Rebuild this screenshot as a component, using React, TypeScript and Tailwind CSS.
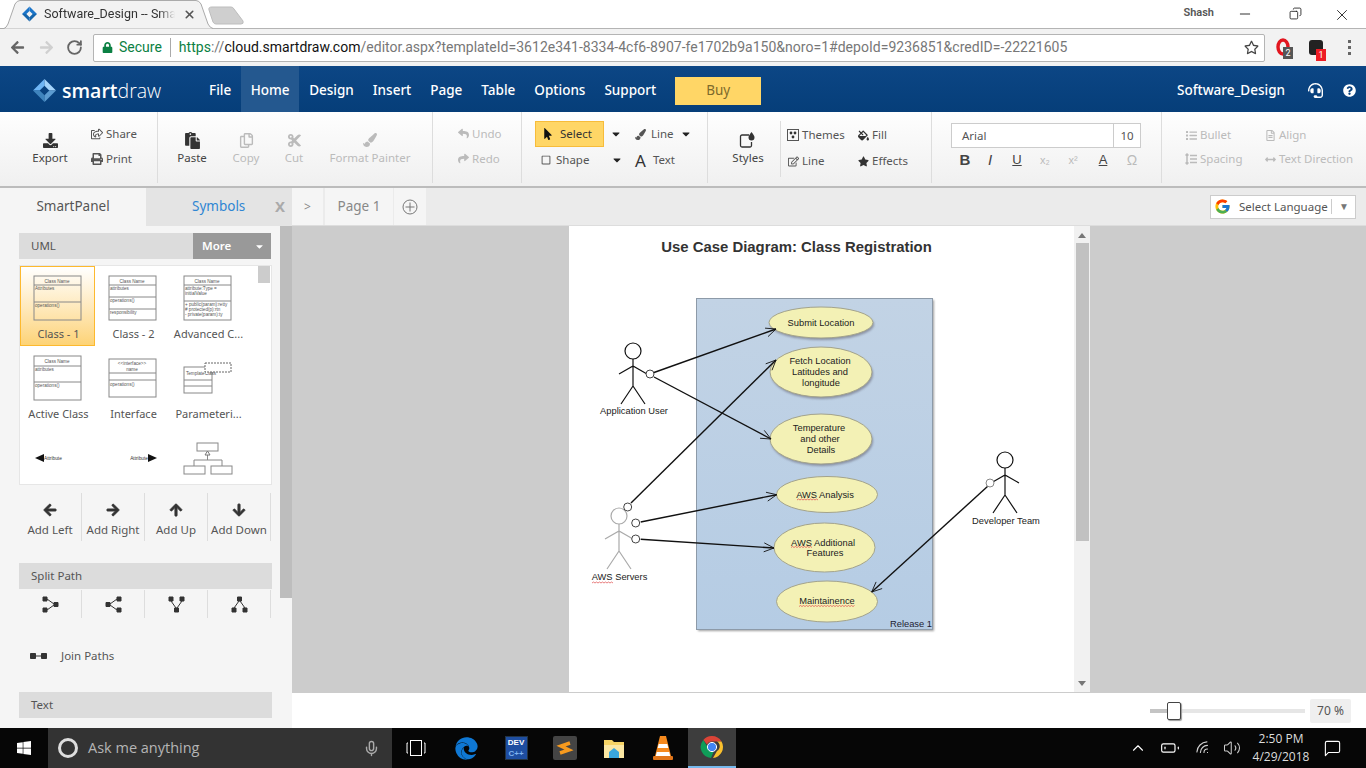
import type { ReactNode } from "react";
import {
  FaArrowDown, FaArrowLeft, FaArrowRight, FaArrowUp, FaArrowsAltH, FaCut, FaDownload, FaEdge, FaFillDrip,
  FaList, FaLock, FaMousePointer, FaPaintBrush, FaPaste, FaPrint, FaQuestionCircle, FaRegCopy, FaRegEdit,
  FaRegShareSquare, FaRegSquare, FaRegStar, FaReply, FaShare, FaStar, FaRegFileAlt, FaHeadset,
  FaWindows, FaCaretDown,
} from "react-icons/fa";
import { FcGoogle } from "react-icons/fc";
import { LuRotateCw, LuMinus, LuCopy, LuX, LuMic, LuChevronUp, LuVolume2, LuMessageSquare, LuWifi, LuBatteryLow } from "react-icons/lu";

const Diamond = ({ size }: { size: number }) => (
  <svg width={size} height={size} viewBox="0 0 24 24">
    <polygon points="12,0 12,7 7,12 0,12" fill="#6fb6f5" />
    <polygon points="12,0 24,12 17,12 12,7" fill="#a5d4fb" />
    <polygon points="0,12 7,12 12,17 12,24" fill="#3f84bd" />
    <polygon points="12,24 12,17 17,12 24,12" fill="#5c9bd0" />
  </svg>
);

const Chrome = () => (
  <div className="flex flex-col h-[66px] bg-[#f2f2f2]">
    <div className="flex h-[29px] bg-white border-b border-[#b4b4b4]">
      <div className="relative w-[244px] h-[29px] shrink-0">
        <svg className="absolute left-0 top-0" width="244" height="29" viewBox="0 0 244 29">
          <path d="M212 7 H231 Q233 7 234 9 L243 21 Q244 24 241 24 H216 Q214 24 213 22 L209 10 Q208 7 212 7Z" fill="#cfcfcf" stroke="#bdbdbd" />
          <path d="M0 28.500 H4 Q6 28 8 24 L15 4 Q17 .5 20 .5 H196 Q199 .5 201 4 L208 24 Q210 28 213 28.500" fill="#f2f2f2" stroke="#aaa" />
        </svg>
        <div className="relative flex items-center h-[28px] pl-[22px]">
          <svg width="15" height="16" viewBox="0 0 24 24">
            <polygon points="12,0 12,7 7,12 0,12" fill="#1b75c9" />
            <polygon points="12,0 24,12 17,12 12,7" fill="#1b75c9" />
            <polygon points="0,12 7,12 12,17 12,24" fill="#1565ac" />
            <polygon points="12,24 12,17 17,12 24,12" fill="#1565ac" />
          </svg>
          <span className="ml-[7px] w-[131px] whitespace-nowrap text-[12.5px] text-[#333] font-['Roboto',sans-serif] [mask-image:linear-gradient(to_right,black_88%,transparent)]">Software_Design -- Smar</span>
          <LuX className="ml-[8px] text-[#555]" size={13} strokeWidth={3} />
        </div>
      </div>
      <div className="flex-1" />
      <span className="text-[11px] text-[#555] font-semibold mt-[5px] mr-[5px] font-['Roboto',sans-serif]">Shash</span>
      <div className="flex items-start w-[147px] pt-[6px] text-[#222]">
        <span className="w-[51px] flex justify-center"><LuMinus size={16} strokeWidth={1.4} /></span>
        <span className="w-[50px] flex justify-center"><LuCopy size={13} strokeWidth={1.6} className="mt-[1px] -scale-x-100" /></span>
        <span className="w-[44px] flex justify-center"><LuX size={18} strokeWidth={1.2} /></span>
      </div>
    </div>
    <div className="flex items-center h-[37px] font-['Roboto',sans-serif]">
      <div className="flex items-center w-[93px] pl-[10px]">
        <FaArrowLeft size={15} className="text-[#666]" />
        <FaArrowRight size={15} className="text-[#d0d0d0] ml-[14px]" />
        <LuRotateCw size={17} strokeWidth={2.6} className="text-[#666] ml-[12px]" />
      </div>
      <div className="flex items-center w-[1172px] h-[28px] bg-white border border-[#b4b4b4] rounded-[2px] pl-[8px] text-[14px] whitespace-nowrap">
        <FaLock size={11} className="text-[#0b8043]" />
        <span className="ml-[6px] text-[#0b8043]">Secure</span>
        <span className="mx-[8px] w-px h-[19px] bg-[#aaa]" />
        <span className="text-[#777] tracking-[0.02px]">
          <span className="text-[#0b8043]">https</span>://<span className="text-[#111]">cloud.smartdraw.com</span>/editor.aspx?templateId=3612e341-8334-4cf6-8907-fe1702b9a150&noro=1#depoId=9236851&credID=-22221605
        </span>
        <span className="flex-1" />
        <FaRegStar size={15} className="text-[#444] mr-[5px]" />
      </div>
      <div className="relative w-[40px] flex justify-center">
        <svg width="18" height="20" viewBox="0 0 18 20" className="-ml-[3px]"><ellipse cx="8" cy="9" rx="5" ry="7" fill="none" stroke="#e2161f" strokeWidth="3.4" /></svg>
        <span className="absolute left-[18px] top-[9px] w-[10px] h-[12px] bg-[#555] text-white text-[9px] leading-[12px] text-center">2</span>
      </div>
      <div className="relative w-[22px] flex justify-center">
        <span className="w-[14px] h-[15px] bg-[#222] rounded-[3px]" />
        <span className="absolute left-[11px] top-[9px] w-[10px] h-[12px] bg-[#ed1c24] text-white text-[9px] leading-[12px] text-center">1</span>
      </div>
      <div className="flex flex-col gap-[3px] ml-[21px]">
        <span className="w-[3px] h-[3px] bg-[#666]" />
        <span className="w-[3px] h-[3px] bg-[#666]" />
        <span className="w-[3px] h-[3px] bg-[#666]" />
      </div>
    </div>
  </div>
);

const menu = ["Design", "Insert", "Page", "Table", "Options", "Support"];

const Header = () => (
  <div className="flex items-center h-[46px] pt-[3px] bg-gradient-to-b from-[#0c4685] to-[#063e79] text-white text-[13.5px] font-medium">
    <div className="flex items-center w-[209px] pl-[33px]">
      <Diamond size={23} />
      <span className="ml-[6px] text-[19.5px] leading-none font-['Open_Sans',sans-serif]"><span className="font-semibold">smart</span><span className="font-light">draw</span></span>
    </div>
    <span>File</span>
    <span className="flex items-center justify-center self-start w-[58px] h-[46px] -mt-[3px] pt-[3px] ml-[10px] bg-[#24588f]">Home</span>
    <div className="flex gap-[19px] ml-[10px]">
      {menu.map((m) => <span key={m}>{m}</span>)}
    </div>
    <span className="flex items-center justify-center w-[86px] h-[28px] ml-[19px] bg-[#ffd666] text-[#7d6a2c] font-normal">Buy</span>
    <span className="flex-1" />
    <span className="mr-[-1px]">Software_Design</span>
    <FaHeadset size={15} className="ml-[24px]" />
    <FaQuestionCircle size={13} className="ml-[20px] mr-[10px]" />
  </div>
);

const Big = ({ icon, label, w, off, ml = 0 }: { icon: ReactNode; label: string; w: number; off?: boolean; ml?: number }) => (
  <div className={`flex flex-col items-center pt-[18px] shrink-0 ${off ? "text-[#bbb]" : "text-[#444]"}`} style={{ width: w, marginLeft: ml }}>
    <div className="flex items-center justify-center h-[20px]">{icon}</div>
    <span className="leading-[16px] whitespace-nowrap">{label}</span>
  </div>
);

const Small = ({ icon, label, off, h = 25 }: { icon: ReactNode; label: string; off?: boolean; h?: number }) => (
  <div className={`flex items-center gap-[3px] whitespace-nowrap ${off ? "text-[#bbb]" : "text-[#555]"}`} style={{ height: h }}>
    <span className="flex justify-center w-[12px]">{icon}</span>
    <span>{label}</span>
  </div>
);

const Ribbon = () => (
  <div className="flex h-[76px] bg-gradient-to-b from-[#fefefe] to-[#f0f0f0] border-b-2 border-b-[#bcbcbc] text-[11.5px]">
    <div className="flex w-[158px] h-[71px] pl-[32px] border-r border-[#ddd] shrink-0">
      <Big w={36} label="Export" icon={<FaDownload size={15} className="text-[#333]" />} />
      <div className="flex flex-col ml-[23px] pt-[9px]">
        <Small label="Share" icon={<FaRegShareSquare size={12} />} />
        <Small label="Print" icon={<FaPrint size={12} />} />
      </div>
    </div>
    <div className="flex w-[275px] h-[71px] pl-[18px] border-r border-[#ddd] shrink-0">
      <Big w={32} label="Paste" icon={<FaPaste size={17} className="text-[#333]" />} />
      <Big w={32} ml={22} off label="Copy" icon={<FaRegCopy size={15} />} />
      <Big w={24} ml={20} off label="Cut" icon={<FaCut size={15} />} />
      <Big w={80} ml={24} off label="Format Painter" icon={<FaPaintBrush size={14} />} />
    </div>
    <div className="flex flex-col w-[89px] h-[71px] pl-[24px] pt-[9px] border-r border-[#ddd] shrink-0">
      <Small off label="Undo" icon={<FaReply size={11} />} />
      <Small off label="Redo" icon={<FaShare size={11} />} />
    </div>
    <div className="flex w-[186px] h-[71px] pt-[9px] pl-[13px] border-r border-[#ddd] shrink-0">
      <div className="flex flex-col w-[90px]">
        <div className="flex items-center">
          <div className="flex items-center w-[69px] h-[26px] pl-[6px] gap-[6px] bg-[#ffd666] border border-[#f7bc3a] text-[#333]">
            <FaMousePointer size={12} className="text-[#111]" />Select
          </div>
          <FaCaretDown size={12} className="ml-[6px] text-[#222]" />
        </div>
        <div className="flex items-center h-[26px] pl-[6px] text-[#555]">
          <FaRegSquare size={10} />
          <span className="ml-[5px]">Shape</span>
          <FaCaretDown size={12} className="ml-[22px] text-[#222]" />
        </div>
      </div>
      <div className="flex flex-col pl-[10px] text-[#555]">
        <div className="flex items-center h-[26px]">
          <FaPaintBrush size={11} />
          <span className="ml-[5px]">Line</span>
          <FaCaretDown size={12} className="ml-[6px] text-[#222]" />
        </div>
        <div className="flex items-center h-[26px]">
          <span className="text-[17px] leading-none text-[#333]">A</span>
          <span className="ml-[7px]">Text</span>
        </div>
      </div>
    </div>
    <div className="flex w-[224px] h-[71px] border-r border-[#ddd] shrink-0">
      <Big w={64} ml={8} label="Styles" icon={
        <svg width="18" height="18" viewBox="0 0 18 18" fill="none" stroke="#333" strokeWidth="1.300">
          <path d="M10 4H3a1.500 1.500 0 0 0-1.500 1.500v9A1.500 1.500 0 0 0 3 16h8a1.500 1.500 0 0 0 1.500-1.500V11" />
          <path d="M12.500 1c2 2.500 3 4 3 5.500a3 3 0 0 1-6 0c0-1.500 1-3 3-5.500z" fill="#333" stroke="none" />
        </svg>
      } />
      <div className="flex w-[152px] h-[56px] mt-[9px] pl-[6px] pt-[1px] border-l border-[#ddd]">
        <div className="flex flex-col w-[70px]">
          <Small h={26} label="Themes" icon={
            <svg width="12" height="12" viewBox="0 0 12 12" fill="#333"><rect x=".5" y=".5" width="11" height="11" fill="none" stroke="#555" /><circle cx="4" cy="4" r="1.400" /><circle cx="8" cy="4" r="1.400" /><circle cx="6" cy="8" r="1.400" /></svg>
          } />
          <Small h={26} label="Line" icon={<FaRegEdit size={11} />} />
        </div>
        <div className="flex flex-col">
          <Small h={26} label="Fill" icon={<FaFillDrip size={11} className="text-[#333]" />} />
          <Small h={26} label="Effects" icon={<FaStar size={11} className="text-[#333]" />} />
        </div>
      </div>
    </div>
    <div className="flex flex-col w-[230px] h-[71px] pl-[19px] pt-[11px] border-r border-[#ddd] shrink-0">
      <div className="flex w-[190px] h-[25px] bg-white border border-[#ccc] text-[#555] leading-[23px]">
        <span className="w-[161px] pl-[10px]">Arial</span>
        <span className="flex-1 border-l border-[#ccc] text-center">10</span>
      </div>
      <div className="flex items-center h-[24px] text-[#444] font-['Liberation_Sans',sans-serif]">
        <span className="w-[14px] ml-[7px] text-center text-[15px] font-bold">B</span>
        <span className="w-[14px] ml-[11px] text-center text-[15px] italic">I</span>
        <span className="w-[14px] ml-[13px] text-center text-[13px] underline">U</span>
        <span className="w-[14px] ml-[14px] text-center text-[11px] text-[#bbb]">x₂</span>
        <span className="w-[14px] ml-[14px] text-center text-[11px] text-[#bbb]">x²</span>
        <span className="w-[14px] ml-[16px] text-center text-[13px] underline">A</span>
        <span className="w-[14px] ml-[15px] text-center text-[14px] text-[#bbb]">Ω</span>
      </div>
    </div>
    <div className="flex pl-[23px] pt-[11px]">
      <div className="flex flex-col w-[79px]">
        <Small off h={24} label="Bullet" icon={<FaList size={11} />} />
        <Small off h={24} label="Spacing" icon={
          <svg width="12" height="12" viewBox="0 0 12 12" fill="none" stroke="#bbb" strokeWidth="1.500"><path d="M2 1v10M.5 2.500 2 1l1.500 1.500M.5 9.500 2 11l1.500-1.500M5 2.500h7M5 6h7M5 9.500h7" /></svg>
        } />
      </div>
      <div className="flex flex-col">
        <Small off h={24} label="Align" icon={<FaRegFileAlt size={11} />} />
        <Small off h={24} label="Text Direction" icon={<FaArrowsAltH size={11} />} />
      </div>
    </div>
  </div>
);

const Box = ({ x, y, w, h, lines = [], color = "#888" }: { x: number; y: number; w: number; h: number; lines?: number[]; color?: string }) => (
  <>
    <rect x={x} y={y} width={w} height={h} fill="none" stroke={color} strokeWidth="1" />
    {lines.map((l) => <line key={l} x1={x} x2={x + w} y1={l} y2={l} stroke={color} />)}
  </>
);

const Tiny = ({ x, y, children, anchor = "middle" }: { x: number; y: number; children: string; anchor?: "middle" | "start" }) => (
  <text x={x} y={y} fontSize="4.6" fill="#555" textAnchor={anchor} fontFamily="Liberation Sans, sans-serif">{children}</text>
);

const thumbs: { label: string; art: ReactNode }[] = [
  { label: "Class - 1", art: <><Box x={14} y={10} w={47} h={44} lines={[19, 36]} /><Tiny x={37} y={16.5}>Class Name</Tiny><Tiny x={15} y={24} anchor="start">Attributes</Tiny><Tiny x={15} y={41} anchor="start">operations()</Tiny></> },
  { label: "Class - 2", art: <><Box x={14} y={10} w={47} h={44} lines={[19, 31, 43]} /><Tiny x={37} y={16.5}>Class Name</Tiny><Tiny x={15} y={24} anchor="start">attributes</Tiny><Tiny x={15} y={36} anchor="start">operations()</Tiny><Tiny x={15} y={48} anchor="start">responsibility</Tiny></> },
  { label: "Advanced C...", art: <><Box x={14} y={10} w={47} h={44} lines={[19, 35]} /><Tiny x={37} y={16.5}>Class Name</Tiny><Tiny x={15} y={24} anchor="start">attribute:Type =</Tiny><Tiny x={15} y={29} anchor="start">initialValue</Tiny><Tiny x={15} y={40} anchor="start">+ public(param):retty</Tiny><Tiny x={15} y={45} anchor="start"># protected(p):rtn</Tiny><Tiny x={15} y={50} anchor="start">- private(param):ty</Tiny></> },
  { label: "Active Class", art: <><Box x={14} y={10} w={47} h={44} lines={[20, 36]} /><Tiny x={37} y={16.5}>Class Name</Tiny><Tiny x={15} y={25} anchor="start">attributes</Tiny><Tiny x={15} y={41} anchor="start">operations()</Tiny></> },
  { label: "Interface", art: <><Box x={14} y={13} w={47} h={38} lines={[27, 34]} /><Tiny x={37} y={19}>{"<<interface>>"}</Tiny><Tiny x={37} y={25}>name</Tiny><Tiny x={15} y={40} anchor="start">operations()</Tiny></> },
  { label: "Parameteri...", art: <><Box x={14} y={21} w={28} h={26} lines={[34, 40]} /><Tiny x={16} y={29} anchor="start">TemplateClass</Tiny><rect x={35} y={17} width={26} height={9} fill="#fff" stroke="#666" strokeDasharray="2 1" /></> },
];

const ArrowThumb = ({ left }: { left: boolean }) => (
  <svg width="75" height="56" viewBox="0 0 75 56">
    {left ? <polygon points="15,32 24,28 24,36" fill="#111" /> : <polygon points="53,28 62,32 53,36" fill="#111" />}
    <text x={left ? 24 : 53} y={33.500} fontSize="4.8" fill="#333" textAnchor={left ? "start" : "end"} fontFamily="Liberation Sans, sans-serif">Attribute</text>
  </svg>
);

const Move = ({ icon, label }: { icon: ReactNode; label: string }) => (
  <div className="flex flex-col items-center w-[63px] h-[48px] border-r border-[#ddd] text-[#333] pt-[8px]">
    <div className="h-[18px] flex items-center">{icon}</div>
    <span className="text-[11.5px] text-[#555] leading-[22px] whitespace-nowrap">{label}</span>
  </div>
);

const Split = ({ d }: { d: string }) => (
  <div className="flex items-center justify-center w-[63px] h-[28px] border-r border-[#ddd]">
    <svg width="17" height="17" viewBox="0 0 17 17" fill="#333" stroke="#333">
      <path d={d} strokeWidth="1" />
    </svg>
  </div>
);

const SmartPanel = () => (
  <div className="flex flex-col w-[292px] h-full shrink-0 bg-[#f5f5f5] text-[#555]">
    <div className="flex h-[38px] text-[13.5px] leading-[36px]">
      <span className="w-[146px] text-center">SmartPanel</span>
      <span className="flex w-[146px] bg-[#e4e4e4] text-[#2f86d3]">
        <span className="ml-[46px] w-[83px]">Symbols</span>
        <span className="text-[#aaa] font-bold text-[15px]">X</span>
      </span>
    </div>
    <div className="flex flex-1 min-h-0">
      <div className="flex flex-col w-[280px] pl-[19px] pt-[7px] overflow-hidden">
        <div className="flex w-[252px] h-[26px] shrink-0 bg-[#dcdcdc] text-[11.5px] leading-[26px]">
          <span className="w-[174px] pl-[12px]">UML</span>
          <span className="flex items-center flex-1 bg-[#999] text-white font-semibold pl-[9px]">More<FaCaretDown size={11} className="ml-[23px]" /></span>
        </div>
        <div className="flex w-[253px] h-[220px] shrink-0 mt-[6px] bg-white border border-[#e6e6e6] overflow-hidden">
          <div className="grid grid-cols-[75px_75px_75px] auto-rows-[80px] w-[237px]">
            {thumbs.map((t, i) => (
              <div key={t.label} className={`flex flex-col items-center ${i === 0 ? "bg-gradient-to-b from-white to-[#fdd376] border border-[#fdb92e]" : ""}`}>
                <svg width="75" height="56" viewBox="0 0 75 56" className={i === 0 ? "-mt-px shrink-0" : "shrink-0"}>{t.art}</svg>
                <span className="pl-[2px] text-[11px] leading-[24px] whitespace-nowrap">{t.label}</span>
              </div>
            ))}
            <ArrowThumb left />
            <ArrowThumb left={false} />
            <svg width="75" height="56" viewBox="0 0 75 56">
              <Box x={27} y={17} w={21} h={8} />
              <Box x={14} y={40} w={21} h={8} />
              <Box x={41} y={40} w={21} h={8} />
              <path d="M37.500 29 V34 M24 40 V34 H52 V40" fill="none" stroke="#888" />
              <polygon points="37.500,25 35,29 40,29" fill="#fff" stroke="#777" />
            </svg>
          </div>
          <div className="w-[12px] h-[17px] ml-[1px] bg-[#ccc]" />
        </div>
        <div className="flex h-[48px] shrink-0 mt-[8px]">
          <Move label="Add Left" icon={<FaArrowLeft size={14} stroke="currentColor" strokeWidth={30} />} />
          <Move label="Add Right" icon={<FaArrowRight size={14} stroke="currentColor" strokeWidth={30} />} />
          <Move label="Add Up" icon={<FaArrowUp size={14} stroke="currentColor" strokeWidth={30} />} />
          <Move label="Add Down" icon={<FaArrowDown size={14} stroke="currentColor" strokeWidth={30} />} />
        </div>
        <div className="w-[253px] h-[26px] shrink-0 mt-[22px] bg-[#dcdcdc] text-[11.5px] leading-[26px] pl-[12px]">Split Path</div>
        <div className="flex h-[28px] shrink-0 mt-px">
          <Split d="M1 1h4v4h-4z M1 12h4v4h-4z M12 6.500h4v4h-4z M5 3l7 5 M5 14l7-5" />
          <Split d="M12 1h4v4h-4z M12 12h4v4h-4z M1 6.500h4v4h-4z M12 3l-7 5 M12 14l-7-5" />
          <Split d="M1 1h4v4h-4z M12 1h4v4h-4z M6.500 12h4v4h-4z M3 5l5 7 M14 5l-5 7" />
          <Split d="M1 12h4v4h-4z M12 12h4v4h-4z M6.500 1h4v4h-4z M3 12l5-7 M14 12l-5-7" />
        </div>
        <div className="flex items-center h-[24px] shrink-0 mt-[26px] pl-[11px] text-[11.5px]">
          <svg width="17" height="7" viewBox="0 0 17 7" fill="#333" stroke="#333"><path d="M.5 .5h5v5h-5z M11.500 .5h5v5h-5z M5 3h7" /></svg>
          <span className="ml-[14px]">Join Paths</span>
        </div>
        <div className="w-[253px] h-[26px] shrink-0 mt-[24px] bg-[#dcdcdc] text-[11.5px] leading-[26px] pl-[12px]">Text</div>
      </div>
      <div className="w-[12px] h-full bg-[#f5f5f5]">
        <div className="h-[372px] bg-[#bdbdbd]" />
      </div>
    </div>
  </div>
);

const head = (x1: number, y1: number, x2: number, y2: number) => {
  const a = Math.atan2(y2 - y1, x2 - x1);
  const pt = (d: number) => `${x2 - 11 * Math.cos(a + d)},${y2 - 11 * Math.sin(a + d)}`;
  return `${pt(0.42)} ${x2},${y2} ${pt(-0.42)}`;
};

const Arrow = ({ x1, y1, x2, y2 }: { x1: number; y1: number; x2: number; y2: number }) => (
  <g fill="none" stroke="#111">
    <line x1={x1} y1={y1} x2={x2} y2={y2} strokeWidth="1.4" />
    <polyline points={head(x1, y1, x2, y2)} strokeWidth="0.9" />
  </g>
);

const Actor = ({ x, y, color = "#111" }: { x: number; y: number; color?: string }) => (
  <g fill="none" stroke={color} strokeWidth="1.2">
    <circle cx={x} cy={y} r="8" fill="#fff" />
    <path d={`M${x} ${y + 8} V${y + 35} M${x - 14} ${y + 23} L${x} ${y + 15} L${x + 14} ${y + 23} M${x - 12} ${y + 53} L${x} ${y + 35} L${x + 12} ${y + 53}`} />
  </g>
);

const Squiggle = ({ x1, x2, y }: { x1: number; x2: number; y: number }) => {
  let d = `M${x1} ${y}`;
  for (let x = x1 + 1.5, up = true; x <= x2; x += 1.5, up = !up) d += ` L${x} ${up ? y - 1 : y}`;
  return <path d={d} fill="none" stroke="#e04848" strokeWidth="0.7" />;
};

const ellipses = [
  [821, 322.5, 52, 15.5], [821, 372, 51, 25], [821, 439, 51, 25],
  [827, 494.5, 50.5, 18], [824.5, 547.5, 50.5, 24.5], [827, 601.5, 50.5, 20.5],
];

const labels: [number, number, string][] = [
  [821, 326, "Submit Location"], [820, 364, "Fetch Location"], [820, 375, "Latitudes and"], [821, 385.5, "longitude"],
  [819, 431, "Temperature"], [820, 442, "and other"], [821, 452.5, "Details"], [825, 498, "AWS Analysis"],
  [823, 546, "AWS Additional"], [825, 556, "Features"], [827, 604, "Maintainence"],
  [634, 414, "Application User"], [619.5, 580, "AWS Servers"], [1006, 524, "Developer Team"],
];

const Diagram = () => (
  <svg width="505" height="466" viewBox="569 226 505 466" fontFamily="Liberation Sans, Arial, sans-serif" className="block bg-white">
    <defs>
      <linearGradient id="rel" x1="0" y1="0" x2="0" y2="1">
        <stop offset="0" stopColor="#c2d3e5" />
        <stop offset="1" stopColor="#b5cce4" />
      </linearGradient>
      <filter id="soft" x="-10%" y="-10%" width="120%" height="130%"><feGaussianBlur stdDeviation="1" /></filter>
    </defs>
    <text x="796.5" y="252" fontSize="14.9" fontWeight="bold" fill="#333" textAnchor="middle">Use Case Diagram: Class Registration</text>
    <rect x="698" y="300" width="236" height="331" fill="#777" filter="url(#soft)" opacity="0.7" />
    <rect x="696.5" y="298.5" width="236" height="331" fill="url(#rel)" stroke="#8d9aa8" />
    <text x="932" y="627" fontSize="9.33" fill="#223" textAnchor="end">Release 1</text>
    {ellipses.map(([cx, cy, rx, ry]) => (
      <g key={cy}>
        {cy < 470 && <ellipse cx={cx + 1} cy={cy + 2} rx={rx} ry={ry} fill="#667" opacity="0.6" filter="url(#soft)" />}
        <ellipse cx={cx} cy={cy} rx={rx} ry={ry} fill="#f3f1b5" stroke="#a3a38c" />
      </g>
    ))}
    {labels.map(([x, y, t]) => (
      <text key={t} x={x} y={y} fontSize="9.33" fill="#222" textAnchor="middle">{t}</text>
    ))}
    <Squiggle x1={797} x2={818} y={500} />
    <Squiggle x1={791} x2={812} y={547.5} />
    <Squiggle x1={592} x2={613} y={583} />
    <Squiggle x1={799} x2={855} y={606.5} />
    <Actor x={633} y={351} />
    <Actor x={619} y={516} color="#aaa" />
    <Actor x={1005} y={460} />
    <Arrow x1={654} y1={372.5} x2={776} y2={329} />
    <Arrow x1={654} y1={377} x2={771} y2={439} />
    <Arrow x1={631} y1={503} x2={776} y2={360} />
    <Arrow x1={640.7} y1={522} x2={776.7} y2={494.7} />
    <Arrow x1={640.7} y1={539.3} x2={774} y2={548} />
    <Arrow x1={988} y1={486} x2={871.7} y2={592} />
    <g fill="#fff" stroke="#444" strokeWidth="1">
      <circle cx="650" cy="374" r="4" />
      <circle cx="627.7" cy="507" r="4" />
      <circle cx="635.7" cy="523" r="4" />
      <circle cx="635.7" cy="539" r="4" />
      <circle cx="990" cy="483" r="4" stroke="#888" />
    </g>
  </svg>
);

const Editor = () => (
  <div className="flex flex-col flex-1 h-full min-w-0">
    <div className="flex items-stretch h-[38px] bg-[#ebebeb] border-b border-[#ddd] text-[#888]">
      <span className="flex items-center justify-center w-[31px] mr-px bg-[#f5f5f5] text-[12px]">&gt;</span>
      <span className="flex items-center justify-center w-[68px] ml-px bg-[#f5f5f5] text-[13.5px]">Page 1</span>
      <span className="flex items-center justify-center w-[32px] ml-px bg-[#f5f5f5]">
        <svg width="16" height="16" viewBox="0 0 16 16" fill="none" stroke="#777"><circle cx="8" cy="8" r="7" /><path d="M8 3.500v9M3.500 8h9" /></svg>
      </span>
      <span className="flex-1" />
      <div className="flex items-center w-[146px] h-[24px] my-auto mr-[10px] bg-white border border-[#ccc] text-[11.5px] text-[#555] whitespace-nowrap">
        <FcGoogle size={17} className="ml-[3px]" />
        <span className="ml-[8px] w-[90px]">Select Language</span>
        <span className="ml-[2px] w-px h-[15px] bg-[#ccc]" />
        <span className="ml-[7px] text-[#777] text-[10px]">▼</span>
      </div>
    </div>
    <div className="flex h-[466px] bg-[#ccc]">
      <div className="w-[277px]" />
      <Diagram />
      <div className="flex flex-col items-center w-[16px] bg-[#f1f1f1]">
        <div className="w-0 h-0 mt-[7px] border-x-[4px] border-x-transparent border-b-[5px] border-b-[#777]" />
        <div className="w-[13px] h-[298px] mt-[5px] bg-[#c1c1c1]" />
        <div className="flex-1" />
        <div className="w-0 h-0 mb-[6px] border-x-[4px] border-x-transparent border-t-[5px] border-t-[#777]" />
      </div>
    </div>
    <div className="flex flex-1 items-center bg-white border-t border-[#ccc] pl-[858px]">
      <div className="relative w-[155px] h-[4px] bg-[#e6e6e6]">
        <div className="w-[24px] h-full bg-[#c4c4c4]" />
        <div className="absolute left-[17px] -top-[7px] w-[14px] h-[18px] bg-white border border-[#444] rounded-[2px] shadow-[1px_1px_1px_#999]" />
      </div>
      <div className="ml-[5px] flex items-center justify-center w-[41px] h-[24px] bg-[#efefef] rounded-[2px] text-[12px] text-[#555]">70 %</div>
    </div>
  </div>
);

const Taskbar = () => (
  <div className="flex items-center h-[40px] bg-[#060606] text-white">
    <div className="flex justify-center w-[48px]"><FaWindows size={16} /></div>
    <div className="flex items-center w-[344px] h-full bg-[#333]">
      <span className="ml-[10px] w-[20px] h-[20px] rounded-full border-[3px] border-[#ddd]" />
      <span className="ml-[10px] text-[14.5px] text-[#b5b5b5] font-['Open_Sans',sans-serif] w-[275px]">Ask me anything</span>
      <LuMic size={17} className="text-[#aaa]" />
    </div>
    <div className="flex justify-center w-[48px]">
      <svg width="20" height="16" viewBox="0 0 20 16" fill="none" stroke="#fff"><rect x="4.500" y=".5" width="11" height="15" /><path d="M2 3h-1v10h1M18 3h1v10h-1" /></svg>
    </div>
    <div className="flex justify-center w-[52px]"><FaEdge size={23} className="text-[#0f78d4]" /></div>
    <div className="flex flex-col items-center justify-center w-[48px]">
      <span className="flex flex-col w-[23px] h-[24px] bg-[#1e4ea1] border border-[#234] text-center text-[8px] leading-[11px] font-bold font-['Liberation_Sans',sans-serif]"><span>DEV</span><span className="text-[#7fb4f0]">C++</span></span>
    </div>
    <div className="flex justify-center w-[50px]">
      <svg width="24" height="24" viewBox="0 0 24 24"><rect width="24" height="24" rx="2" fill="#444" /><path d="M17 7 8 10 16 14 7 17" fill="none" stroke="#f79a1e" strokeWidth="3.500" /></svg>
    </div>
    <div className="flex justify-center w-[48px]">
      <svg width="22" height="22" viewBox="0 0 22 22"><path d="M1 3h8l2 2h10v16H1z" fill="#f6d365" /><rect x="1" y="8" width="20" height="13" fill="#fbe7a3" /><path d="M6 21v-6l5-4 5 4v6z" fill="#3aa6dd" /></svg>
    </div>
    <div className="flex justify-center w-[50px]">
      <svg width="20" height="26" viewBox="0 0 20 26"><path d="M7 1h6l5 20H2z" fill="#f68a1e" /><path d="M5.700 9h8.600l1 4H4.700zM3.800 17h12.400l1 4H2.800z" fill="#fff" /><rect x="0" y="21" width="20" height="4" rx="1" fill="#e2761a" /></svg>
    </div>
    <div className="flex justify-center items-center w-[48px] h-full bg-[#3d3d3d] border-b-[2px] border-[#76b9ed]">
      <svg width="24" height="24" viewBox="0 0 24 24">
        <path d="M12 1a11 11 0 0 1 9.500 5.500H12a5.500 5.500 0 0 0-5 3L3.300 4.900A11 11 0 0 1 12 1z" fill="#db4437" />
        <path d="M21.500 6.500A11 11 0 0 1 13 23l4-7a5.500 5.500 0 0 0 0-9.500z" fill="#fbc02d" />
        <path d="M3.300 4.900 7.500 12a5.500 5.500 0 0 0 6 5L11 23A11 11 0 0 1 3.300 4.900z" fill="#0f9d58" />
        <circle cx="12" cy="12" r="4.600" fill="#4285f4" stroke="#fff" strokeWidth="1" />
      </svg>
    </div>
    <span className="flex-1" />
    <LuChevronUp size={18} strokeWidth={1.5} className="mr-[13px]" />
    <LuBatteryLow size={20} strokeWidth={1.4} className="mr-[15px]" />
    <LuWifi size={17} strokeWidth={1.6} className="mr-[11px] text-[#ccc] -rotate-45" />
    <LuVolume2 size={18} strokeWidth={1.4} className="mr-[9px] text-[#ccc]" />
    <div className="flex flex-col items-center w-[62px] text-[12px] leading-[18px] font-['Open_Sans',sans-serif] text-[#ddd]">
      <span>2:50 PM</span>
      <span>4/29/2018</span>
    </div>
    <LuMessageSquare size={19} strokeWidth={1.4} className="ml-[11px] mr-[24px]" />
  </div>
);

export default function App() {
  return (
    <div className="flex flex-col w-[1366px] h-[768px] overflow-hidden bg-white font-['Noto_Sans',sans-serif]">
      <Chrome />
      <Header />
      <Ribbon />
      <div className="flex h-[540px]">
        <SmartPanel />
        <Editor />
      </div>
      <Taskbar />
    </div>
  );
}
